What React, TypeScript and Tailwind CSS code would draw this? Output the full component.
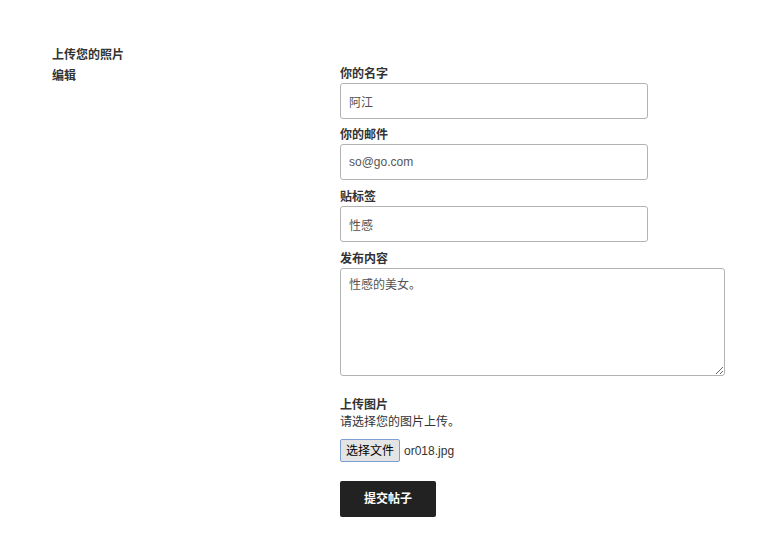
import React from 'react';

const font = { fontFamily: '"Liberation Sans", "Noto Sans CJK SC", sans-serif' };

function Field({ label, value, gap }: { label: string; value: string; gap: string }) {
  return (
    <div className={gap}>
      <label className="block text-[12px] leading-4 font-bold text-[#333] mb-[1px]">{label}</label>
      <input
        readOnly
        defaultValue={value}
        className="block w-[308px] h-[36px] px-[8px] text-[12px] text-[#555] border border-[#b3b3b3] rounded-[3px] bg-white outline-none"
      />
    </div>
  );
}

export default function App() {
  return (
    <div className="min-h-[548px] bg-white text-[#333]" style={font}>
      <div className="flex pt-[47px] pl-[52px]">
        {/* Left column */}
        <div className="w-[288px]">
          <h3 className="text-[12px] leading-4 font-bold">上传您的照片</h3>
          <p className="text-[12px] leading-4 font-bold mt-[5px]">编辑</p>
        </div>

        {/* Form */}
        <div className="pt-[19px]">
          <Field label="你的名字" value="阿江" gap="mb-[8px]" />
          <Field label="你的邮件" value="so@go.com" gap="mb-[9px]" />
          <Field label="贴标签" value="性感" gap="mb-[9px]" />

          <div>
            <label className="block text-[12px] leading-4 font-bold text-[#333] mb-[1px]">发布内容</label>
            <textarea
              readOnly
              defaultValue="性感的美女。"
              className="block w-[385px] h-[108px] px-[8px] py-[8px] text-[12px] leading-4 text-[#555] border border-[#b3b3b3] rounded-[3px] bg-white outline-none"
            />
          </div>

          <div className="mt-[21px]">
            <label className="block text-[12px] leading-4 font-bold text-[#333]">上传图片</label>
            <p className="text-[12px] leading-4 text-[#333] mt-[1px]">请选择您的图片上传。</p>
            <div className="flex items-center gap-[4px] mt-[9px]">
              <span className="inline-flex items-center h-[23px] px-[5px] text-[12px] text-black bg-[#e4e4e4] border border-[#7b9fd5] rounded-[2px]">
                选择文件
              </span>
              <span className="text-[12px] text-[#333]">or018.jpg</span>
            </div>
          </div>

          <button className="mt-[19px] w-[96px] h-[36px] bg-[#222] text-white text-[12px] font-bold rounded-[2px]">
            提交帖子
          </button>
        </div>
      </div>
    </div>
  );
}
